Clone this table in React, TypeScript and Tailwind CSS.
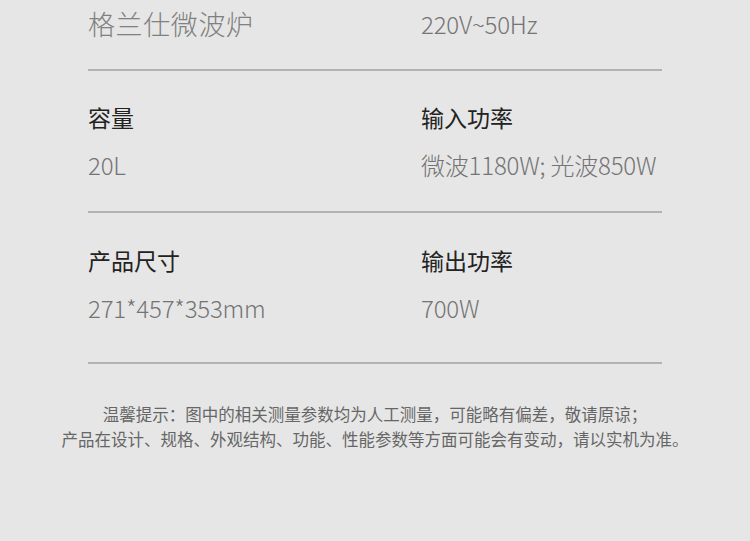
const FONT = "font-['Noto_Sans_CJK_SC','Noto_Sans',sans-serif]";

const ROWS = [
  {
    left: { label: '容量', value: '20L' },
    right: { label: '输入功率', value: '微波1180W; 光波850W' },
    pad: 'pt-[31px] pb-[31px]',
  },
  {
    left: { label: '产品尺寸', value: '271*457*353mm' },
    right: { label: '输出功率', value: '700W' },
    pad: 'pt-[32px] pb-[39px]',
  },
];

function Cell({ label, value }: { label: string; value: string }) {
  return (
    <div className="flex flex-col gap-[18px]">
      <div className="text-[23px] leading-[30px] text-[#222222]">{label}</div>
      <div className="text-[24px] leading-[30px] font-light tracking-[-0.2px] text-[#747474]">{value}</div>
    </div>
  );
}

export default function App() {
  return (
    <div className={`${FONT} w-[750px] h-[541px] overflow-hidden bg-[#e6e6e6]`}>
      <div className="ml-[88px] w-[574px]">
        {/* first row, label scrolled above view */}
        <div className="grid grid-cols-[333px_1fr] pt-[6px] pb-[27px]">
          <div className="text-[27px] leading-[36px] font-light tracking-[0.6px] text-[#808080]">格兰仕微波炉</div>
          <div className="text-[24px] leading-[36px] font-light tracking-[-0.2px] text-[#747474]">220V~50Hz</div>
        </div>
        {ROWS.map((r, i) => (
          <div key={i}>
            <div className="h-[2px] bg-[#b2b2b2]" />
            <div className={`grid grid-cols-[333px_1fr] ${r.pad}`}>
              <Cell {...r.left} />
              <Cell {...r.right} />
            </div>
          </div>
        ))}
        <div className="h-[2px] bg-[#b2b2b2]" />
      </div>
      <div className="mt-[38px] flex flex-col items-center text-[16.5px] leading-[25px] text-[#666666]">
        <p>温馨提示：图中的相关测量参数均为人工测量，可能略有偏差，敬请原谅；</p>
        <p>产品在设计、规格、外观结构、功能、性能参数等方面可能会有变动，请以实机为准。</p>
      </div>
    </div>
  );
}
